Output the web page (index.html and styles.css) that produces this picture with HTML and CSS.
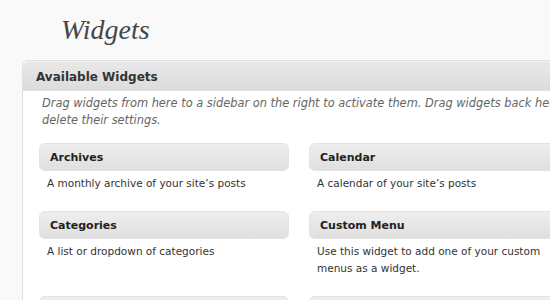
FILE: index.html
```html
<!DOCTYPE html>
<html>
<head>
<meta charset="utf-8">
<link rel="stylesheet" href="styles.css">
</head>
<body>
<div class="page">
  <h2 class="page-title">Widgets</h2>
  <div class="panel">
    <div class="panel-head">Available Widgets</div>
    <div class="panel-body">
      <p class="intro">Drag widgets from here to a sidebar on the right to activate them. Drag widgets back here to deactivate them and<br>delete their settings.</p>
      <div class="grid">
        <div class="widget">
          <div class="widget-top">Archives</div>
          <div class="widget-desc">A monthly archive of your site’s posts</div>
        </div>
        <div class="widget">
          <div class="widget-top">Calendar</div>
          <div class="widget-desc">A calendar of your site’s posts</div>
        </div>
        <div class="widget">
          <div class="widget-top">Categories</div>
          <div class="widget-desc">A list or dropdown of categories</div>
        </div>
        <div class="widget">
          <div class="widget-top">Custom Menu</div>
          <div class="widget-desc">Use this widget to add one of your custom<br>menus as a widget.</div>
        </div>
        <div class="widget">
          <div class="widget-top">Links</div>
          <div class="widget-desc">Your blogroll</div>
        </div>
        <div class="widget">
          <div class="widget-top">Meta</div>
          <div class="widget-desc">Log in/out, admin, feed and WordPress links</div>
        </div>
      </div>
    </div>
  </div>
</div>
</body>
</html>
```
FILE: styles.css
```css
html, body {
  margin: 0;
  padding: 0;
  background: #f9f9f9;
  overflow: hidden;
  width: 550px;
  height: 300px;
}
.page {
  width: 900px;
  font-family: "DejaVu Sans", "Liberation Sans", sans-serif;
  color: #333;
}
.page-title {
  margin: 0;
  padding: 16px 0 0 61px;
  height: 60px;
  box-sizing: border-box;
  font-family: "Liberation Serif", serif;
  font-style: italic;
  font-weight: normal;
  font-size: 28px;
  line-height: 28px;
  color: #464646;
}
.panel {
  margin-left: 22px;
  width: 800px;
  border: 1px solid #dfdfdf;
  border-top-left-radius: 6px;
  background: #fff;
}
.panel-head {
  height: 30px;
  box-sizing: border-box;
  padding: 7px 0 0 13px;
  font-size: 12px;
  font-weight: bold;
  line-height: 16px;
  color: #333;
  background: linear-gradient(#e8e8e8, #dcdcdc);
  border-top: 1px solid #f2f2f2;
  border-top-left-radius: 6px;
  border-bottom: 1px solid #dfdfdf;
}
.panel-body {
  padding: 4px 16px 0 16px;
}
.intro {
  margin: 0 0 14px 3px;
  font-size: 11.4px;
  line-height: 17px;
  font-style: italic;
  color: #666;
  white-space: nowrap;
}
.grid {
  display: grid;
  grid-template-columns: 250px 250px;
  column-gap: 20px;
}
.widget {
  margin-bottom: 19px;
}
.widget-top {
  height: 28px;
  box-sizing: border-box;
  padding: 6px 0 0 10px;
  font-size: 11px;
  font-weight: bold;
  line-height: 16px;
  color: #222;
  border-radius: 6px;
  background: linear-gradient(#eeeeee, #dfdfdf);
  border: 1px solid #e3e3e3;
}
.widget-desc {
  padding: 4px 0 0 8px;
  font-size: 10.5px;
  line-height: 17px;
  color: #333;
}
```
